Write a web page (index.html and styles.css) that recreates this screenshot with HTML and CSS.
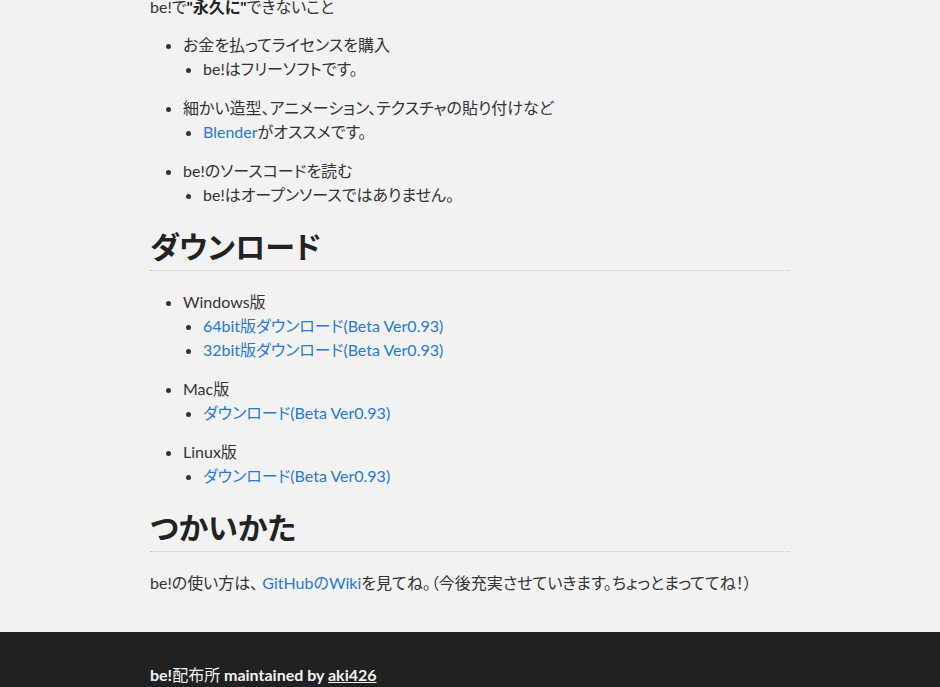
FILE: index.html
```html
<!DOCTYPE html>
<html lang="ja">
<head>
    <meta charset="UTF-8">
    <meta name="viewport" content="width=device-width, initial-scale=1.0">
    <title>be!配布所</title>
    <link rel="stylesheet" href="styles.css">
</head>
<body>
    <div class="main">
        <p class="lead">be!で<strong>"永久に"</strong>できないこと</p>
        <ul class="list">
            <li>お金を払ってライセンスを購入
                <ul>
                    <li>be!はフリーソフトです。</li>
                </ul>
            </li>
            <li>細かい造型、アニメーション、テクスチャの貼り付けなど
                <ul>
                    <li><a href="#">Blender</a>がオススメです。</li>
                </ul>
            </li>
            <li>be!のソースコードを読む
                <ul>
                    <li>be!はオープンソースではありません。</li>
                </ul>
            </li>
        </ul>

        <h2>ダウンロード</h2>
        <ul class="list">
            <li>Windows版
                <ul>
                    <li><a href="#">64bit版ダウンロード(Beta Ver0.93)</a></li>
                    <li><a href="#">32bit版ダウンロード(Beta Ver0.93)</a></li>
                </ul>
            </li>
            <li>Mac版
                <ul>
                    <li><a href="#">ダウンロード(Beta Ver0.93)</a></li>
                </ul>
            </li>
            <li>Linux版
                <ul>
                    <li><a href="#">ダウンロード(Beta Ver0.93)</a></li>
                </ul>
            </li>
        </ul>

        <h2>つかいかた</h2>
        <p>be!の使い方は、 <a href="#">GitHubのWiki</a>を見てね。（今後充実させていきます。ちょっとまっててね！）</p>
    </div>

    <footer class="footer">
        <div class="footer-inner">
            be!<span class="site">配布所</span> maintained by <a href="#">aki426</a>
        </div>
    </footer>
</body>
</html>
```

FILE: styles.css
```css
body {
    margin: 0;
    background-color: #f2f2f2;
    color: #333;
    font-family: Lato, "Noto Sans CJK JP", sans-serif;
    font-size: 16px;
    line-height: 24px;
    font-feature-settings: "palt";
}
a {
    color: #2879d0;
    text-decoration: none;
}
.main {
    width: 640px;
    margin: -5px auto 0;
}
.lead strong {
    color: #222;
}
p {
    margin: 0;
}
.list {
    margin: 14px 0 19px;
    padding-left: 33px;
    list-style: disc;
}
.list > li + li {
    margin-top: 15px;
}
.list ul {
    margin: 0;
    padding-left: 20px;
    list-style: disc;
}
h2 {
    margin: 0 0 19px;
    padding-bottom: 4px;
    border-bottom: 1px dotted #c8c8c8;
    color: #222;
    font-size: 30px;
    line-height: 40px;
    font-weight: bold;
}
.footer {
    margin-top: 37px;
    background-color: #212121;
    color: #f2f2f2;
}
.footer-inner {
    width: 640px;
    margin: 0 auto;
    padding: 31px 0 20px;
    font-weight: bold;
}
.footer .site {
    font-weight: normal;
}
.footer a {
    color: #f2f2f2;
    text-decoration: underline;
}
```
